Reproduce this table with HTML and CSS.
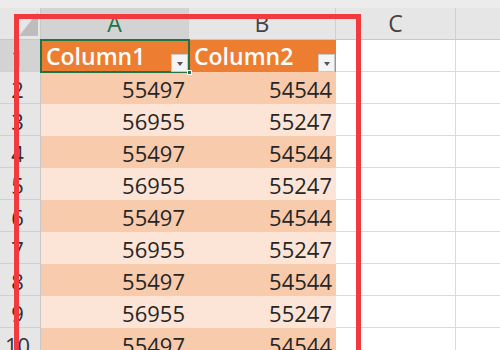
FILE: index.html
```html
<!DOCTYPE html>
<html>
<head>
<meta charset="utf-8">
<link rel="stylesheet" href="styles.css">
</head>
<body>
<div class="app">
  <div class="topband"></div>
  <div class="sheet">
    <div class="corner"><span class="tri"></span></div>
    <div class="colhead sel">A</div>
    <div class="colhead">B</div>
    <div class="colhead">C</div>
    <div class="colhead last"></div>

    <div class="rowhead sel">1</div>
    <div class="th active">Column1<span class="filter"></span><span class="handle"></span></div>
    <div class="th">Column2<span class="filter"></span></div>
    <div class="cell"></div><div class="cell last"></div>

    <div class="rowhead">2</div><div class="td dark">55497</div><div class="td dark">54544</div><div class="cell"></div><div class="cell last"></div>
    <div class="rowhead">3</div><div class="td light">56955</div><div class="td light">55247</div><div class="cell"></div><div class="cell last"></div>
    <div class="rowhead">4</div><div class="td dark">55497</div><div class="td dark">54544</div><div class="cell"></div><div class="cell last"></div>
    <div class="rowhead">5</div><div class="td light">56955</div><div class="td light">55247</div><div class="cell"></div><div class="cell last"></div>
    <div class="rowhead">6</div><div class="td dark">55497</div><div class="td dark">54544</div><div class="cell"></div><div class="cell last"></div>
    <div class="rowhead">7</div><div class="td light">56955</div><div class="td light">55247</div><div class="cell"></div><div class="cell last"></div>
    <div class="rowhead">8</div><div class="td dark">55497</div><div class="td dark">54544</div><div class="cell"></div><div class="cell last"></div>
    <div class="rowhead">9</div><div class="td light">56955</div><div class="td light">55247</div><div class="cell"></div><div class="cell last"></div>
    <div class="rowhead">10</div><div class="td dark">55497</div><div class="td dark">54544</div><div class="cell"></div><div class="cell last"></div>
  </div>
  <div class="highlight"></div>
</div>
</body>
</html>
```
FILE: styles.css
```css
* { box-sizing: border-box; }
html, body { margin: 0; padding: 0; }
body {
  width: 500px;
  height: 350px;
  overflow: hidden;
  background: #ffffff;
  font-family: "Open Sans", "Liberation Sans", sans-serif;
}
.app { position: relative; width: 500px; height: 350px; overflow: hidden; }
.topband { height: 8px; background: #ececec; }
.sheet {
  display: grid;
  grid-template-columns: 41px 148px 147px 120px 1fr;
  grid-template-rows: 32px;
  grid-auto-rows: 32px;
}
.corner {
  position: relative;
  background: #e6e6e6;
  border-right: 1px solid #c8c8c8;
  border-bottom: 1px solid #c8c8c8;
}
.tri {
  position: absolute;
  right: 2px;
  bottom: 3px;
  width: 0; height: 0;
  border-left: 19px solid transparent;
  border-bottom: 24px solid #bdbdbd;
}
.colhead {
  background: #e6e6e6;
  border-right: 1px solid #d0d0d0;
  border-bottom: 1px solid #c8c8c8;
  color: #444;
  font-size: 23px;
  text-align: center;
  line-height: 31px;
}
.colhead.sel { background: #d3d3d3; color: #217346; border-bottom: 1px solid #217346; }
.colhead.last { border-right: none; }
.rowhead {
  background: #e6e6e6;
  border-right: 1px solid #c8c8c8;
  border-bottom: 1px solid #d0d0d0;
  color: #333;
  font-size: 22px;
  text-align: center;
  padding-right: 5px;
  line-height: 34px;
}
.rowhead.sel { background: #d3d3d3; }
.cell {
  border-right: 1px solid #dadada;
  border-bottom: 1px solid #dadada;
}
.cell.last { border-right: none; }
.th {
  position: relative;
  background: #ed7d31;
  color: #ffffff;
  font-size: 23px;
  font-weight: 600;
  padding-left: 5px;
  line-height: 32px;
}
.th.active { outline: 2px solid #217346; outline-offset: -1px; z-index: 1; }
.filter {
  position: absolute;
  right: 1px;
  bottom: 0;
  width: 17px;
  height: 18px;
  background: #f4f4f4;
  border: 1px solid #c9c9c9;
}
.filter::after {
  content: "";
  position: absolute;
  left: 5px;
  top: 7px;
  border-left: 3px solid transparent;
  border-right: 3px solid transparent;
  border-top: 4px solid #555;
}
.handle {
  position: absolute;
  right: -3px;
  bottom: -3px;
  width: 5px;
  height: 5px;
  background: #217346;
  border: 1px solid #fff;
}
.td {
  color: #262626;
  font-size: 22px;
  text-align: right;
  padding-right: 4px;
  line-height: 35px;
}
.td.dark { background: #f8cbad; }
.td.light { background: #fce4d6; }
.highlight {
  position: absolute;
  left: 14px;
  top: 14px;
  width: 347px;
  height: 360px;
  border: 5px solid #f13a3f;
  pointer-events: none;
}
```
